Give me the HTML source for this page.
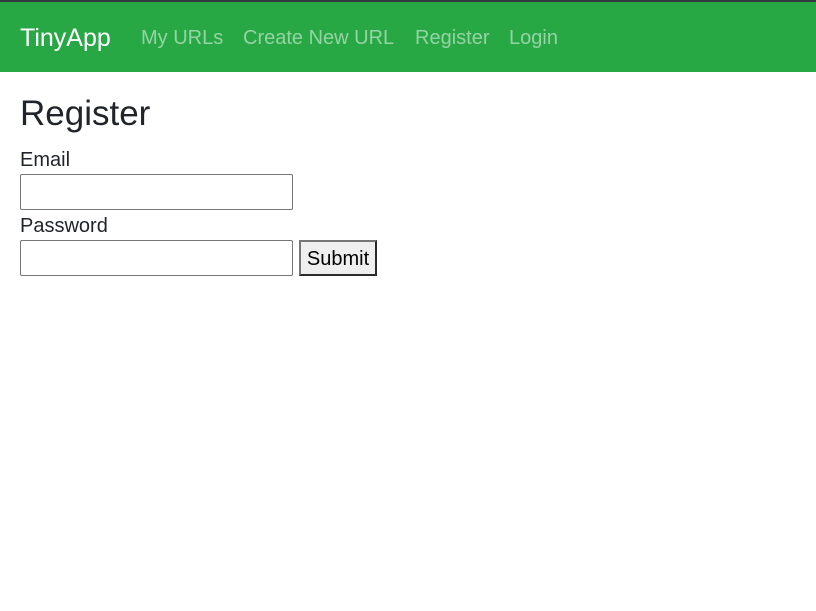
<!DOCTYPE html>
<html><head><style>
body{margin:0;font-family:"Liberation Sans",sans-serif;color:#212529;background:#fff;}
.top{height:2px;background:#343a40}
nav{height:70px;background:#28a745;position:relative}
nav span{position:absolute;top:1px;line-height:70px;white-space:nowrap}
.brand{left:20px;font-size:25px;color:#fff}
.l{font-size:20px;color:rgba(255,255,255,.5)}
h1{position:absolute;left:20px;top:77px;margin:0;font-size:35px;font-weight:400;line-height:74px}
.lab{position:absolute;left:20px;font-size:20px;line-height:24px}
input{position:absolute;left:20px;width:273px;height:36px;box-sizing:border-box;border:1px solid #767676;border-radius:2px;margin:0;padding:0}
button{position:absolute;left:299px;top:240px;width:78px;height:36px;box-sizing:border-box;border:2px solid #2b2b2b;border-top-color:#767676;border-left-color:#767676;background:#efefef;font:20px "Liberation Sans",sans-serif;padding:2px 0 0;color:#000}
</style></head><body>
<div class="top"></div>
<nav>
<span class="brand">TinyApp</span>
<span class="l" style="left:141px">My URLs</span>
<span class="l" style="left:243px">Create New URL</span>
<span class="l" style="left:415px">Register</span>
<span class="l" style="left:509px">Login</span>
</nav>
<h1>Register</h1>
<div class="lab" style="top:148px">Email</div>
<input style="top:174px">
<div class="lab" style="top:214px">Password</div>
<input style="top:240px">
<button>Submit</button>
</body></html>
